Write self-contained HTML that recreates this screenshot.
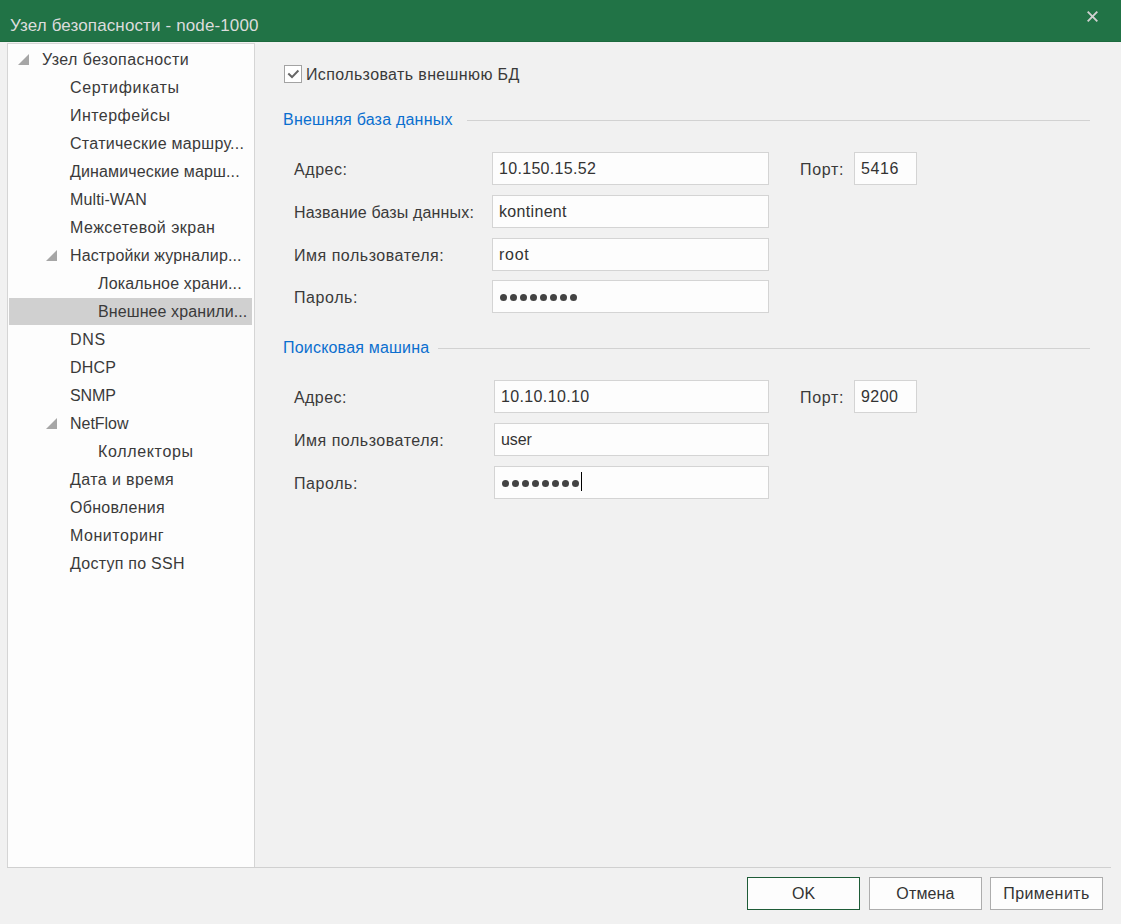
<!DOCTYPE html>
<html><head><meta charset="utf-8">
<style>
*{margin:0;padding:0;box-sizing:border-box}
html,body{width:1121px;height:924px;overflow:hidden;background:#f1f1f1;font-family:"Liberation Sans",sans-serif;color:#333}
.abs{position:absolute;white-space:nowrap}
#title{position:absolute;left:0;top:0;width:1121px;height:42px;background:#217346;border-bottom:1px solid #1c6a3e}
#title .t{position:absolute;left:10px;top:16px;font-size:17px;line-height:20px;color:#dcdcdc;white-space:nowrap}
#close{position:absolute;left:1085px;top:9px}
#tree{position:absolute;left:7px;top:43px;width:248px;height:825px;background:#fdfdfd;border:1px solid #d5d5d5}
.ti{position:absolute;font-size:16px;line-height:20px;color:#3a3a3a;white-space:nowrap}
.tri{position:absolute;width:0;height:0;border-left:11px solid transparent;border-bottom:11px solid #a6a6a6}
.sel{position:absolute;left:1px;top:254px;width:243px;height:27px;background:#d0d0d0}
.lbl{position:absolute;font-size:16px;line-height:20px;color:#3a3a3a;white-space:nowrap}
.inp{position:absolute;background:#fdfdfd;border:1px solid #d4d4d4;height:33px}
.inp span{position:absolute;left:6px;top:6px;font-size:16px;line-height:20px;color:#333;white-space:nowrap}
.hdr{position:absolute;font-size:16px;line-height:20px;color:#0b6fcf;white-space:nowrap}
.hline{position:absolute;height:1px;background:#d2d2d2}
#sep{position:absolute;left:7px;top:867px;width:1104px;height:1px;background:#d0d0d0}
.btn{position:absolute;top:877px;width:113px;height:33px;background:#fdfdfd;border:1px solid #adadad;font-size:16px;line-height:31px;text-align:center;color:#333}
</style></head><body>
<div id="title"><div class="t" id="title_t" style="letter-spacing:0.129px;">Узел безопасности - node-1000</div>
<svg id="close" width="15" height="15" viewBox="0 0 15 15"><path d="M2.7 2.7L12.3 12.3M12.3 2.7L2.7 12.3" stroke="#d0d0d0" stroke-width="1.9"/></svg>
</div>
<div id="tree">
<div class="sel"></div>
<div class="tri" style="left:10px;top:10px"></div>
<div class="ti" id="t0" style="left:34px;top:6px;letter-spacing:0.431px;">Узел безопасности</div>
<div class="ti" id="t1" style="left:62px;top:34px;letter-spacing:0.680px;">Сертификаты</div>
<div class="ti" id="t2" style="left:62px;top:62px;letter-spacing:0.456px;">Интерфейсы</div>
<div class="ti" id="t3" style="left:62px;top:90px;letter-spacing:0.295px;">Статические маршру...</div>
<div class="ti" id="t4" style="left:62px;top:118px;letter-spacing:0.142px;">Динамические марш...</div>
<div class="ti" id="t5" style="left:62px;top:146px;letter-spacing:0.125px;">Multi-WAN</div>
<div class="ti" id="t6" style="left:62px;top:174px;letter-spacing:0.473px;">Межсетевой экран</div>
<div class="tri" style="left:38px;top:206px"></div>
<div class="ti" id="t7" style="left:62px;top:202px;letter-spacing:0.140px;">Настройки журналир...</div>
<div class="ti" id="t8" style="left:90px;top:230px;letter-spacing:0.135px;">Локальное храни...</div>
<div class="ti" id="t9" style="left:90px;top:258px;letter-spacing:0.100px;">Внешнее хранили...</div>
<div class="ti" id="t10" style="left:62px;top:286px;letter-spacing:0.700px;">DNS</div>
<div class="ti" id="t11" style="left:62px;top:314px;letter-spacing:0.200px;">DHCP</div>
<div class="ti" id="t12" style="left:62px;top:342px;letter-spacing:-0.100px;">SNMP</div>
<div class="tri" style="left:38px;top:374px"></div>
<div class="ti" id="t13" style="left:62px;top:370px;letter-spacing:-0.033px;">NetFlow</div>
<div class="ti" id="t14" style="left:90px;top:398px;letter-spacing:0.667px;">Коллекторы</div>
<div class="ti" id="t15" style="left:62px;top:426px;letter-spacing:0.409px;">Дата и время</div>
<div class="ti" id="t16" style="left:62px;top:454px;letter-spacing:0.278px;">Обновления</div>
<div class="ti" id="t17" style="left:62px;top:482px;letter-spacing:0.544px;">Мониторинг</div>
<div class="ti" id="t18" style="left:62px;top:510px;letter-spacing:0.258px;">Доступ по SSH</div>
</div>
<svg class="abs" style="left:284px;top:65px" width="18" height="18" viewBox="0 0 18 18">
<rect x="0.5" y="0.5" width="17" height="17" fill="#fff" stroke="#a3a3a3"/>
<path d="M4.3 8.6L8 12.1L14.4 5.5" fill="none" stroke="#666" stroke-width="2"/>
</svg>
<div class="lbl" id="cb" style="left:306px;top:65px;letter-spacing:0.373px;">Использовать внешнюю БД</div>
<div class="hdr" id="h1" style="left:283px;top:110px;letter-spacing:0.222px;">Внешняя база данных</div>
<div class="hline" style="left:467px;top:120px;width:623px"></div>
<div class="lbl" id="l1" style="left:294px;top:160px;letter-spacing:0.560px;">Адрес:</div>
<div class="inp" style="left:492px;top:152px;width:277px"><span id="i1" style="letter-spacing:0.309px;">10.150.15.52</span></div>
<div class="lbl" id="p1" style="left:800px;top:160px;letter-spacing:0.700px;">Порт:</div>
<div class="inp" style="left:854px;top:152px;width:63px"><span id="i2" style="letter-spacing:0.633px;">5416</span></div>
<div class="lbl" id="l2" style="left:294px;top:203px;letter-spacing:0.165px;">Название базы данных:</div>
<div class="inp" style="left:492px;top:195px;width:277px"><span id="i3" style="letter-spacing:0.325px;">kontinent</span></div>
<div class="lbl" id="l3" style="left:294px;top:246px;letter-spacing:0.519px;">Имя пользователя:</div>
<div class="inp" style="left:492px;top:238px;width:277px"><span id="i4" style="letter-spacing:0.700px;">root</span></div>
<div class="lbl" id="l4" style="left:294px;top:288px;letter-spacing:0.583px;">Пароль:</div>
<div class="inp" style="left:492px;top:280px;width:277px"><svg style="position:absolute;left:7px;top:13px" width="80" height="7" viewBox="0 0 80 7"><circle cx="3.5" cy="3.5" r="3.5" fill="#434343"/><circle cx="13.5" cy="3.5" r="3.5" fill="#434343"/><circle cx="23.5" cy="3.5" r="3.5" fill="#434343"/><circle cx="33.5" cy="3.5" r="3.5" fill="#434343"/><circle cx="43.5" cy="3.5" r="3.5" fill="#434343"/><circle cx="53.5" cy="3.5" r="3.5" fill="#434343"/><circle cx="63.5" cy="3.5" r="3.5" fill="#434343"/><circle cx="73.5" cy="3.5" r="3.5" fill="#434343"/></svg></div>
<div class="hdr" id="h2" style="left:283px;top:338px;letter-spacing:0.200px;">Поисковая машина</div>
<div class="hline" style="left:438px;top:348px;width:652px"></div>
<div class="lbl" id="l5" style="left:294px;top:388px;letter-spacing:0.420px;">Адрес:</div>
<div class="inp" style="left:494px;top:380px;width:275px"><span id="i6" style="letter-spacing:0.360px;">10.10.10.10</span></div>
<div class="lbl" id="p2" style="left:800px;top:388px;letter-spacing:0.700px;">Порт:</div>
<div class="inp" style="left:854px;top:380px;width:63px"><span id="i7" style="letter-spacing:0.433px;">9200</span></div>
<div class="lbl" id="l6" style="left:294px;top:431px;letter-spacing:0.519px;">Имя пользователя:</div>
<div class="inp" style="left:494px;top:423px;width:275px"><span id="i8" style="letter-spacing:-0.100px;">user</span></div>
<div class="lbl" id="l7" style="left:294px;top:474px;letter-spacing:0.583px;">Пароль:</div>
<div class="inp" style="left:494px;top:466px;width:275px"><svg style="position:absolute;left:7px;top:13px" width="80" height="7" viewBox="0 0 80 7"><circle cx="3.5" cy="3.5" r="3.5" fill="#434343"/><circle cx="13.5" cy="3.5" r="3.5" fill="#434343"/><circle cx="23.5" cy="3.5" r="3.5" fill="#434343"/><circle cx="33.5" cy="3.5" r="3.5" fill="#434343"/><circle cx="43.5" cy="3.5" r="3.5" fill="#434343"/><circle cx="53.5" cy="3.5" r="3.5" fill="#434343"/><circle cx="63.5" cy="3.5" r="3.5" fill="#434343"/><circle cx="73.5" cy="3.5" r="3.5" fill="#434343"/></svg><div style="position:absolute;left:86px;top:5px;width:1px;height:19px;background:#000"></div></div>
<div id="sep"></div>
<div class="btn" style="left:747px;border-color:#1e5c37"><span id="b1" style="letter-spacing:-0.100px;">OK</span></div>
<div class="btn" style="left:869px"><span id="b2" style="letter-spacing:0.160px;">Отмена</span></div>
<div class="btn" style="left:990px"><span id="b3" style="letter-spacing:0.438px;">Применить</span></div>
</body></html>
